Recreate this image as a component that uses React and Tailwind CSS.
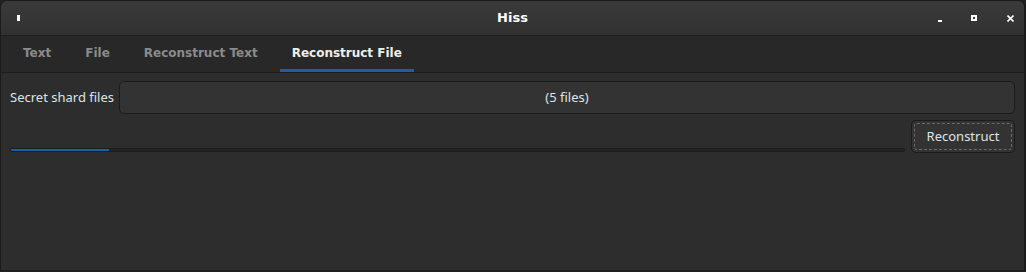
import React from "react";

const font = { fontFamily: '"Noto Sans", "DejaVu Sans", sans-serif' };
const boldFont = { fontFamily: '"DejaVu Sans", "Noto Sans", sans-serif' };

const TitleBar = () => (
  <div className="h-[35px] flex items-center justify-between pl-4 pr-[10px] bg-gradient-to-b from-[#3a3a3a] to-[#313131] border-b border-[#1f1f1f] rounded-t-[6px]">
    <div className="w-[3px] h-[6px] bg-white" />
    <div className="text-[13px] font-bold text-white absolute left-0 right-0 text-center pointer-events-none" style={boldFont}>Hiss</div>
    <div className="flex items-center">
      <div className="w-[4px] h-[2px] bg-white mt-[5px]" />
      <div className="w-[6px] h-[6px] border-2 border-white ml-[29px]" />
      <svg width="7" height="7" viewBox="0 0 7 7" className="text-white ml-[30px]">
        <path d="M0.5 0.5 L6.5 6.5 M6.5 0.5 L0.5 6.5" stroke="currentColor" strokeWidth="1.6" />
      </svg>
    </div>
  </div>
);

const tabs = ["Text", "File", "Reconstruct Text", "Reconstruct File"];

const TabBar = () => (
  <div className="h-[37px] flex items-stretch px-[10px] bg-[#282828] border-b border-[#1d1d1d]" style={boldFont}>
    {tabs.map((t, i) => {
      const active = i === 3;
      return (
        <div
          key={t}
          className={`flex items-center px-3 pt-[1px] text-[12px] font-bold mr-[10px] border-b-[3px] ${
            active ? "text-[#eeeeec] border-[#1c5eaa]" : "text-[#8b8b8b] border-transparent"
          }`}
        >
          {t}
        </div>
      );
    })}
  </div>
);

export default function App() {
  return (
    <div className="w-[1026px] h-[272px] bg-[#222]" style={font}>
      <div className="relative h-[271px] flex flex-col border border-[#1b1b1b] border-r-2 rounded-t-[6px] overflow-hidden">
        <TitleBar />
        <TabBar />
        <div className="flex-1 bg-[#2d2d2d] px-[9px] pt-[8px]">
          <div className="flex items-center gap-[5px]">
            <span className="text-[13px] text-[#dfe3e8] whitespace-nowrap">Secret shard files</span>
            <div className="flex-1 h-[33px] rounded-[5px] border border-[#1b1b1b] bg-[#333333] flex items-center justify-center text-[13px] text-[#dfe3e8]">
              (5 files)
            </div>
          </div>
          <div className="flex items-center gap-[6px] mt-[6px]">
            <div className="flex-1 h-[4px] mt-[27px] bg-[#242424] border border-[#1d1d1d] rounded-[2px] overflow-hidden">
              <div className="h-full bg-[#1c5eaa]" style={{ width: "11%" }} />
            </div>
            <div className="w-[104px] h-[33px] rounded-[5px] border border-[#1b1b1b] bg-[#333333] p-[2px]">
              <div className="w-full h-full border border-dashed border-[#6a6a6a] rounded-[3px] flex items-center justify-center text-[13px] text-[#dfe3e8]">
                Reconstruct
              </div>
            </div>
          </div>
        </div>
      </div>
    </div>
  );
}
